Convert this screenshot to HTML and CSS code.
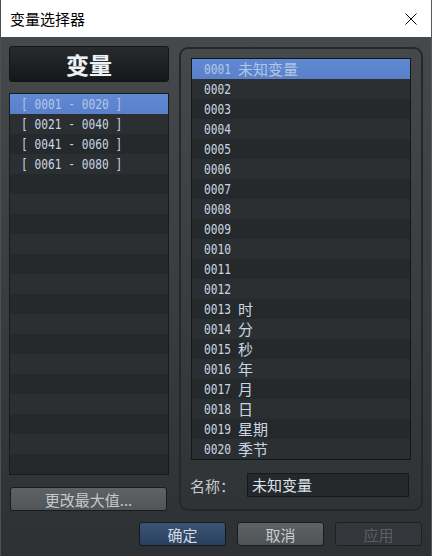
FILE: index.html
```html
<!DOCTYPE html>
<html lang="zh">
<head>
<meta charset="utf-8">
<title>变量选择器</title>
<link rel="stylesheet" href="styles.css">
</head>
<body>
<div class="window">
  <div class="titlebar">
    <span class="title">变量选择器</span>
    <svg class="close" width="12" height="12" viewBox="0 0 12 12"><path d="M0.5 0.5 L11.5 11.5 M11.5 0.5 L0.5 11.5" stroke="#000" stroke-width="1" fill="none"/></svg>
  </div>
  <div class="content">
    <div class="main">
      <div class="left">
        <div class="header">变量</div>
        <div class="list left-list">
          <div class="row sel"><span class="mono">[ 0001 - 0020 ]</span></div>
          <div class="row"><span class="mono">[ 0021 - 0040 ]</span></div>
          <div class="row"><span class="mono">[ 0041 - 0060 ]</span></div>
          <div class="row"><span class="mono">[ 0061 - 0080 ]</span></div>
          <div class="row"></div><div class="row"></div><div class="row"></div><div class="row"></div><div class="row"></div>
          <div class="row"></div><div class="row"></div><div class="row"></div><div class="row"></div><div class="row"></div>
          <div class="row"></div><div class="row"></div><div class="row"></div><div class="row"></div><div class="row"></div>
        </div>
        <div class="btn btn-max">更改最大值...</div>
      </div>
      <div class="panel">
        <div class="list right-list">
          <div class="row sel"><span class="mono num">0001</span><span class="name">未知变量</span></div>
          <div class="row"><span class="mono num">0002</span></div>
          <div class="row"><span class="mono num">0003</span></div>
          <div class="row"><span class="mono num">0004</span></div>
          <div class="row"><span class="mono num">0005</span></div>
          <div class="row"><span class="mono num">0006</span></div>
          <div class="row"><span class="mono num">0007</span></div>
          <div class="row"><span class="mono num">0008</span></div>
          <div class="row"><span class="mono num">0009</span></div>
          <div class="row"><span class="mono num">0010</span></div>
          <div class="row"><span class="mono num">0011</span></div>
          <div class="row"><span class="mono num">0012</span></div>
          <div class="row"><span class="mono num">0013</span><span class="name">时</span></div>
          <div class="row"><span class="mono num">0014</span><span class="name">分</span></div>
          <div class="row"><span class="mono num">0015</span><span class="name">秒</span></div>
          <div class="row"><span class="mono num">0016</span><span class="name">年</span></div>
          <div class="row"><span class="mono num">0017</span><span class="name">月</span></div>
          <div class="row"><span class="mono num">0018</span><span class="name">日</span></div>
          <div class="row"><span class="mono num">0019</span><span class="name">星期</span></div>
          <div class="row"><span class="mono num">0020</span><span class="name">季节</span></div>
        </div>
        <div class="namerow">
          <span class="name-label">名称：</span>
          <div class="name-input">未知变量</div>
        </div>
      </div>
    </div>
    <div class="footer">
      <div class="btn btn-ok">确定</div>
      <div class="btn btn-cancel">取消</div>
      <div class="btn btn-apply">应用</div>
    </div>
  </div>
</div>
</body>
</html>
```

FILE: styles.css
```css
* { box-sizing: border-box; }
html, body { margin: 0; padding: 0; }
body {
  width: 432px;
  height: 556px;
  overflow: hidden;
  background: #2e3134;
  font-family: "Noto Sans CJK SC", "Noto Sans", sans-serif;
}
.window {
  height: 556px;
  display: flex;
  flex-direction: column;
  border-left: 1px solid #4d5053;
  border-right: 1px solid #55585b;
}
.titlebar {
  height: 37px;
  flex: none;
  background: #ffffff;
  display: flex;
  align-items: center;
  justify-content: space-between;
  padding: 0 14px 0 9px;
  color: #000;
  font-size: 15px;
}
.title { line-height: 20px; }
.close { display: block; }
.content {
  flex: 1;
  background: linear-gradient(#46494c, #2e3134);
  padding: 9px 8px 0 8px;
  display: flex;
  flex-direction: column;
}
.main {
  display: flex;
  gap: 10px;
  height: 465px;
}
.left {
  width: 160px;
  display: flex;
  flex-direction: column;
}
.header {
  height: 36px;
  border: 1px solid #131517;
  border-radius: 3px;
  background: linear-gradient(#282b2e, #15181b);
  color: #eef2f6;
  font-weight: bold;
  font-size: 23px;
  display: flex;
  align-items: center;
  justify-content: center;
  text-shadow: 0 0 1px rgba(255,255,255,0.3);
}
.list {
  border: 1px solid #181a1c;
  background: #25292b;
  overflow: hidden;
}
.left-list {
  margin-top: 11px;
  height: 382px;
}
.row {
  height: 20px;
  line-height: 20px;
  color: #c9d5e2;
  white-space: nowrap;
  display: flex;
  align-items: center;
}
.left-list .row { padding-left: 11px; }
.right-list .row { padding-left: 12px; }
.row:nth-child(even) { background: #2c2f32; }
.row.sel {
  background: linear-gradient(#6089d4, #5a80c9);
  color: #b2c6e6;
}
.mono {
  display: inline-block;
  font-family: "DejaVu Sans Mono", "Liberation Mono", monospace;
  font-size: 14px;
  line-height: 20px;
  transform: scaleX(0.8);
  transform-origin: 0 50%;
}
.num { margin-right: -6.7px; }
.name {
  font-size: 15px;
  margin-left: 7px;
  line-height: 20px;
}
.btn {
  height: 24px;
  border: 1px solid #1a1c1e;
  border-radius: 3px;
  font-size: 15px;
  display: flex;
  align-items: center;
  justify-content: center;
}
.btn-max {
  margin: 12px 2px 0 1px;
  background: linear-gradient(#5f6265, #525558);
  color: #c4c8cc;
}
.panel {
  width: 244px;
  height: 464px;
  margin-top: 1px;
  border: 2px solid #25282a;
  border-radius: 9px;
  padding: 9px 10px 0 10px;
}
.right-list { height: 402px; border-color: #141618; }
.namerow {
  display: flex;
  align-items: center;
  margin-top: 13px;
}
.name-label {
  width: 57px;
  margin-left: -1px;
  font-size: 15px;
  color: #c6cacf;
}
.name-input {
  width: 162px;
  height: 24px;
  border: 1px solid #16181a;
  background: #25282b;
  color: #dde3ea;
  font-size: 15px;
  line-height: 22px;
  padding-left: 4px;
}
.footer {
  display: flex;
  justify-content: flex-end;
  gap: 11px;
  margin-top: 11px;
  padding-right: 1px;
}
.footer .btn { width: 87px; }
.btn-ok {
  background: linear-gradient(#3b5476, #2b405d);
  border-color: #141a22;
  color: #d2dae6;
}
.btn-cancel {
  background: linear-gradient(#5f6265, #505356);
  color: #c8ccd0;
}
.btn-apply {
  background: #33363a;
  border-color: #1e2022;
  color: #5c6064;
}
```
